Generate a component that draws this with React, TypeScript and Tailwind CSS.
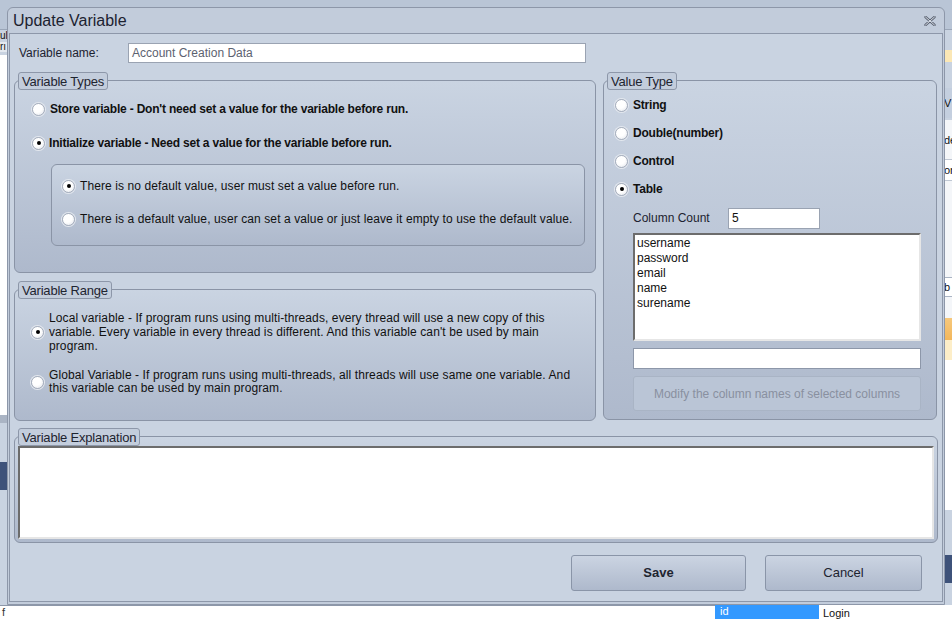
import React from "react";

const font = "font-['Liberation_Sans',Arial,sans-serif]";

const Radio: React.FC<{ checked?: boolean }> = ({ checked }) => (
  <span className="relative flex items-center justify-center w-[13px] h-[13px] shrink-0 rounded-full border border-[#a7afbd] bg-[radial-gradient(circle_at_40%_35%,#ffffff_45%,#dfe3ea_100%)] shadow-[0_0_0_1px_#e4e8ef]">
    {checked && <span className="w-[4px] h-[4px] rounded-full bg-black" />}
  </span>
);

const Legend: React.FC<{ children: React.ReactNode }> = ({ children }) => (
  <div className="absolute left-[4px] top-0 h-[18px] px-[3px] flex items-center rounded-[3px] border border-[#8d97a9] bg-[#c3cddc] text-[13px] text-[#1e2430] leading-none tracking-[-0.2px]">
    {children}
  </div>
);

const Group: React.FC<{ title: string; className?: string; children: React.ReactNode }> = ({ title, className, children }) => (
  <div className={`relative pt-[8px] ${className ?? ""}`}>
    <div className="h-full rounded-[6px] border border-[#8a94a6] bg-gradient-to-b from-[#cad4e2] to-[#aeb9cc]">{children}</div>
    <Legend>{title}</Legend>
  </div>
);

export default function App() {
  return (
    <div className={`relative w-[952px] h-[619px] overflow-hidden bg-[#c9d3e1] ${font} text-[12px] text-[#111]`}>
      {/* app behind the dialog */}
      <div className="absolute inset-x-0 top-0 h-[30px] bg-[#b9c5d6] border-b border-[#9aa6b8]" />
      <div className="absolute left-0 top-[30px] w-[7px] h-[12px] bg-[#c9d3e1] text-[10px] leading-[12px] overflow-hidden">ul</div>
      <div className="absolute left-0 top-[42px] w-[7px] h-[10px] bg-[#e4e9f0] text-[10px] leading-[10px] overflow-hidden">rı</div>
      <div className="absolute left-0 top-[55px] w-[7px] h-[360px] bg-white" />
      <div className="absolute left-0 top-[415px] w-[7px] h-[8px] bg-[#aab4c4]" />
      <div className="absolute left-0 top-[462px] w-[7px] h-[28px] bg-[#3e527a]" />
      <div className="absolute right-0 top-[50px] w-[8px] h-[12px] bg-[#fbe7b5]" />
      <div className="absolute right-0 top-[88px] w-[8px] h-[30px] bg-[#c4cfdf] text-[11px] leading-[30px]">V</div>
      <div className="absolute right-0 top-[120px] w-[8px] h-[210px] bg-[#f4f6f9]" />
      <div className="absolute right-0 top-[133px] w-[8px] h-[14px] text-[11px] leading-[14px] overflow-hidden">de</div>
      <div className="absolute right-0 top-[159px] w-[8px] h-[22px] bg-white border-y border-[#c0c8d4] text-[11px] leading-[20px] overflow-hidden">on</div>
      <div className="absolute right-0 top-[277px] w-[8px] h-[20px] bg-white border-y border-[#aab4c4] text-[11px] leading-[18px] overflow-hidden">b</div>
      <div className="absolute right-0 top-[318px] w-[8px] h-[22px] bg-gradient-to-b from-[#f6c87c] to-[#f3b75b]" />
      <div className="absolute right-0 top-[340px] w-[8px] h-[20px] bg-[#fdeec8]" />
      <div className="absolute right-0 top-[360px] w-[8px] h-[150px] bg-white" />
      <div className="absolute right-0 top-[555px] w-[8px] h-[28px] bg-[#3e527a]" />
      <div className="absolute inset-x-0 bottom-0 h-[14px] bg-white flex items-end text-[11px] leading-[12px]">
        <div className="w-[715px] h-full border-t border-[#8d97a9] text-[#333] pl-[2px] overflow-hidden">f</div>
        <div className="w-[104px] h-full bg-[#3399ff] text-white pl-[5px]">id</div>
        <div className="pl-[4px]">Login</div>
      </div>

      {/* dialog */}
      <div className="absolute left-[7px] top-[7px] w-[938px] h-[598px] flex flex-col rounded-t-[6px] border border-[#8d97a9] bg-[#c2ccdb]">
        <div className="h-[25px] shrink-0 flex items-center justify-between pl-[5px] pr-[8px]">
          <span className="text-[16px] text-[#1c2230] leading-none">Update Variable</span>
          <svg width="12" height="10" viewBox="0 0 12 10">
            <path d="M1.5 1 L10.5 9 M10.5 1 L1.5 9" stroke="#5a6272" strokeWidth="2.4" strokeLinecap="round" fill="none" />
            <path d="M1.5 1 L10.5 9 M10.5 1 L1.5 9" stroke="#e8ecf2" strokeWidth="0.9" strokeLinecap="round" fill="none" />
          </svg>
        </div>
        <div className="flex-1 mx-[1px] mb-[2px] border border-[#8d97a9] bg-[#c9d3e1] flex flex-col px-[4px] pt-[9px]">
          <div className="flex items-center h-[20px] pl-[5px]">
            <span className="w-[109px] text-[#1c2230]">Variable name:</span>
            <div className="w-[458px] h-[20px] border border-[#9aa3b2] bg-white flex items-center pl-[3px] text-[#5c6270]">
              Account Creation Data
            </div>
          </div>

          <div className="flex gap-[7px] mt-[9px]">
            <div className="w-[582px] flex flex-col gap-[8px]">
              <Group title="Variable Types" className="h-[201px]">
                <div className="flex flex-col pl-[17px] pt-[21px] font-bold tracking-[-0.2px]">
                  <div className="flex items-center gap-[5px] h-[14px]">
                    <Radio />
                    <span>Store variable - Don't need set a value for the variable before run.</span>
                  </div>
                  <div className="flex items-center gap-[4px] h-[14px] mt-[20px]">
                    <Radio checked />
                    <span>Initialize variable - Need set a value for the variable before run.</span>
                  </div>
                </div>
                <div className="ml-[36px] mr-[10px] mt-[14px] h-[82px] rounded-[6px] border border-[#8a94a6] bg-gradient-to-b from-[#cad4e2] to-[#aeb9cc] pl-[10px] pt-[14px] tracking-[0.1px]">
                  <div className="flex items-center gap-[5px] h-[14px]">
                    <Radio checked />
                    <span>There is no default value, user must set a value before run.</span>
                  </div>
                  <div className="flex items-center gap-[5px] h-[14px] mt-[19px]">
                    <Radio />
                    <span>There is a default value, user can set a value or just leave it empty to use the default value.</span>
                  </div>
                </div>
              </Group>
              <Group title="Variable Range" className="h-[140px]">
                <div className="flex flex-col pl-[16px] pt-[21px] tracking-[0.1px] leading-[14px]">
                  <div className="flex items-center gap-[5px]">
                    <Radio checked />
                    <span className="w-[528px]">
                      Local variable - If program runs using multi-threads, every thread will use a new copy of this variable. Every variable in every thread is different. And this variable can't be used by main program.
                    </span>
                  </div>
                  <div className="flex items-center gap-[5px] mt-[16px]">
                    <Radio />
                    <span className="w-[528px] leading-[13px]">
                      Global Variable - If program runs using multi-threads, all threads will use same one variable. And this variable can be used by main program.
                    </span>
                  </div>
                </div>
              </Group>
            </div>

            <Group title="Value Type" className="w-[334px] h-[348px]">
              <div className="flex flex-col pl-[11px] pt-[10px] font-bold tracking-[-0.2px]">
                {["String", "Double(number)", "Control", "Table"].map((t) => (
                  <div key={t} className="flex items-center gap-[5px] h-[28px]">
                    <Radio checked={t === "Table"} />
                    <span>{t}</span>
                  </div>
                ))}
              </div>
              <div className="flex flex-col pl-[29px] pr-[15px]">
                <div className="flex items-center h-[20px] mt-[5px]">
                  <span className="w-[95px] text-[#1c2230]">Column Count</span>
                  <div className="w-[92px] h-[21px] border border-[#9aa3b2] bg-white pl-[3px] flex items-center">5</div>
                </div>
                <div className="h-[108px] mt-[5px] border-2 border-t-[#6c6c6c] border-l-[#6c6c6c] border-r-[#e6e6e6] border-b-[#e6e6e6] bg-white pl-[2px] pt-[1px] leading-[15px]">
                  <div>username</div>
                  <div>password</div>
                  <div>email</div>
                  <div>name</div>
                  <div>surename</div>
                </div>
                <div className="h-[21px] mt-[7px] border border-[#8d97a9] bg-white" />
                <div className="h-[35px] mt-[7px] rounded-[3px] border border-[#a9b4c5] bg-[#bac5d6] flex items-center justify-center text-[#8990a0]">
                  Modify the column names of selected columns
                </div>
              </div>
            </Group>
          </div>

          <Group title="Variable Explanation" className="h-[115px] mt-[7px]">
            <div className="h-full pt-[9px] px-[3px] pb-[3px]">
              <div className="h-full border-2 border-t-[#6c6c6c] border-l-[#6c6c6c] border-r-[#e6e6e6] border-b-[#e6e6e6] bg-white" />
            </div>
          </Group>

          <div className="flex justify-end gap-[19px] pr-[16px] mt-[12px]">
            <button className="w-[175px] h-[36px] rounded-[3px] border border-[#8a95a8] bg-gradient-to-b from-[#cbd4e2] to-[#aeb9cc] font-bold text-[13px] text-[#1e2430]">
              Save
            </button>
            <button className="w-[157px] h-[36px] rounded-[3px] border border-[#8a95a8] bg-gradient-to-b from-[#cbd4e2] to-[#aeb9cc] text-[13px] text-[#1e2430]">
              Cancel
            </button>
          </div>
        </div>
      </div>
    </div>
  );
}
